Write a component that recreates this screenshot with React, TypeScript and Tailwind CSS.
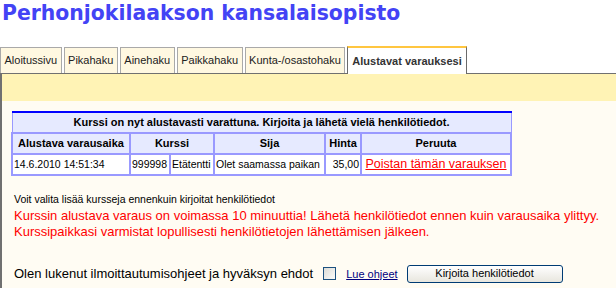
import React from 'react';

const tabs = ['Aloitussivu', 'Pikahaku', 'Ainehaku', 'Paikkahaku', 'Kunta-/osastohaku'];

const App = () => {
  return (
    <div className="w-[616px] h-[288px] overflow-hidden bg-white font-['Liberation_Sans',Arial,sans-serif] text-black">
      {/* Title */}
      <h1 className="pl-[2px] pt-[1px] font-['DejaVu_Sans',sans-serif] text-[20.4px] leading-[24px] font-bold text-[#4343f5]">
        Perhonjokilaakson kansalaisopisto
      </h1>

      {/* Tabs */}
      <div className="mt-[22px] flex items-end gap-[2px] border-b border-[#707070] h-[27px]">
        {tabs.map((t) => (
          <div
            key={t}
            className="h-[26px] px-[3.5px] flex items-center border border-b-0 border-[#a9a9a9] bg-[#fff8e1] text-[11px] text-[#222]"
          >
            {t}
          </div>
        ))}
        <div className="-mb-px h-[28px] px-[4px] pt-[1px] flex items-center border-x border-[#6a6a6a] border-t-[2px] border-t-[#ffc640] bg-white text-[11px] font-bold text-[#333]">
          Alustavat varauksesi
        </div>
      </div>

      {/* Panel */}
      <div className="border-l-2 border-[#707070] bg-[#fffcf3] h-[214px]">
        <div className="h-[27px] bg-[#fff3b5]" />

        <table className="ml-[9px] mt-[10px] w-[501px] table-fixed border-collapse text-[11px]">
          <colgroup>
            <col className="w-[118px]" />
            <col className="w-[40px]" />
            <col className="w-[44px]" />
            <col className="w-[111px]" />
            <col className="w-[36px]" />
            <col />
          </colgroup>
          <tbody>
            <tr>
              <td
                colSpan={6}
                className="h-[21px] bg-[#e6eaff] border-x border-[#9999ff] border-t-2 border-t-[#0000ff] border-b border-b-[#1c5c1c] text-center font-bold"
              >
                Kurssi on nyt alustavasti varattuna. Kirjoita ja lähetä vielä henkilötiedot.
              </td>
            </tr>
            <tr className="bg-[#e6eaff] font-bold h-[21px]">
              <td className="border-2 border-[#9999ff] text-center">Alustava varausaika</td>
              <td colSpan={2} className="border-2 border-[#9999ff] text-center">Kurssi</td>
              <td className="border-2 border-[#9999ff] text-center">Sija</td>
              <td className="border-2 border-[#9999ff] text-center">Hinta</td>
              <td className="border-2 border-[#9999ff] text-center">Peruuta</td>
            </tr>
            <tr className="bg-white h-[21px] whitespace-nowrap text-[10.5px]">
              <td className="border-2 border-[#9999ff] px-px">14.6.2010 14:51:34</td>
              <td className="border-2 border-[#9999ff] px-px">999998</td>
              <td className="border-2 border-[#9999ff] px-px">Etätentti</td>
              <td className="border-2 border-[#9999ff] px-px overflow-hidden">Olet saamassa paikan</td>
              <td className="border-2 border-[#9999ff] px-px text-right">35,00</td>
              <td className="border-2 border-[#9999ff] px-px text-center">
                <a className="text-[12.5px] text-[#ff0000] underline">Poistan tämän varauksen</a>
              </td>
            </tr>
          </tbody>
        </table>

        <p className="ml-[12px] mt-[17px] text-[10.5px] leading-[13px]">
          Voit valita lisää kursseja ennenkuin kirjoitat henkilötiedot
        </p>
        <p className="ml-[12px] mt-[2px] text-[13px] leading-[16px] text-[#ff0000]">
          Kurssin alustava varaus on voimassa 10 minuuttia! Lähetä henkilötiedot ennen kuin varausaika ylittyy.
          <br />
          Kurssipaikkasi varmistat lopullisesti henkilötietojen lähettämisen jälkeen.
        </p>

        <div className="ml-[12px] mt-[24px] flex items-center">
          <span className="text-[13px]">Olen lukenut ilmoittautumisohjeet ja hyväksyn ehdot</span>
          <span className="ml-[10px] w-[13px] h-[13px] border border-[#1c5180] bg-gradient-to-br from-[#dcdcd7] to-[#fbfbf9]" />
          <a className="ml-[10px] text-[11px] text-[#000080] underline">Lue ohjeet</a>
          <button className="ml-[9px] w-[156px] h-[18px] rounded-[3px] border border-[#003c74] bg-gradient-to-b from-white to-[#e8e6de] text-[11px] leading-none">
            Kirjoita henkilötiedot
          </button>
        </div>
      </div>
    </div>
  );
};

export default App;
